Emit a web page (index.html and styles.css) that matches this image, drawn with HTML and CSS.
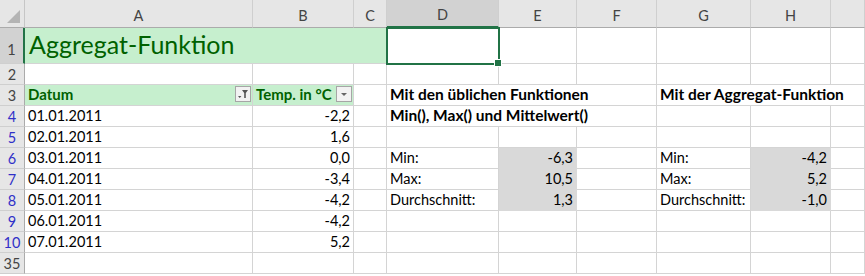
FILE: index.html
```html
<!DOCTYPE html>
<html lang="de">
	<head>
		<meta charset="UTF-8" />
		<meta name="viewport" content="width=device-width, initial-scale=1.0" />
		<title>Aggregat-Funktion</title>
		<link rel="stylesheet" href="styles.css">
	</head>
	<body>
		<div class="sheet">
			<!-- Spaltenköpfe -->
			<div class="corner"><span class="corner-tri"></span></div>
			<div class="col-head">A</div>
			<div class="col-head">B</div>
			<div class="col-head">C</div>
			<div class="col-head selected">D</div>
			<div class="col-head">E</div>
			<div class="col-head">F</div>
			<div class="col-head">G</div>
			<div class="col-head">H</div>
			<div class="col-head"></div>

			<!-- Zeile 1 -->
			<div class="row-head selected tall">1</div>
			<div class="cell title">Aggregat-Funktion</div>
			<div class="cell active"></div>
			<div class="cell"></div>
			<div class="cell"></div>
			<div class="cell"></div>
			<div class="cell"></div>
			<div class="cell"></div>

			<!-- Zeile 2 -->
			<div class="row-head">2</div>
			<div class="cell"></div><div class="cell"></div><div class="cell"></div>
			<div class="cell"></div><div class="cell"></div><div class="cell"></div>
			<div class="cell"></div><div class="cell"></div><div class="cell"></div>

			<!-- Zeile 3 -->
			<div class="row-head">3</div>
			<div class="cell th">
				<span>Datum</span>
				<span class="filter">
					<svg width="14" height="14" viewBox="0 0 14 14">
						<path d="M6 3h6l-2.2 3v5h-1.6v-5z" fill="#555" />
						<path d="M2 9h3.4l-1.7 2z" fill="#555" />
					</svg>
				</span>
			</div>
			<div class="cell th">
				<span>Temp. in °C</span>
				<span class="filter">
					<svg width="14" height="14" viewBox="0 0 14 14">
						<path d="M4 6h6l-3 3z" fill="#666" />
					</svg>
				</span>
			</div>
			<div class="cell"></div>
			<div class="cell bold span3">Mit den üblichen Funktionen</div>
			<div class="cell bold span3">Mit der Aggregat-Funktion</div>

			<!-- Zeile 4 -->
			<div class="row-head blue">4</div>
			<div class="cell">01.01.2011</div>
			<div class="cell num">-2,2</div>
			<div class="cell"></div>
			<div class="cell bold span3">Min(), Max() und Mittelwert()</div>
			<div class="cell"></div><div class="cell"></div><div class="cell"></div>

			<!-- Zeile 5 -->
			<div class="row-head blue">5</div>
			<div class="cell">02.01.2011</div>
			<div class="cell num">1,6</div>
			<div class="cell"></div><div class="cell"></div><div class="cell"></div>
			<div class="cell"></div><div class="cell"></div><div class="cell"></div>
			<div class="cell"></div>

			<!-- Zeile 6 -->
			<div class="row-head blue">6</div>
			<div class="cell">03.01.2011</div>
			<div class="cell num">0,0</div>
			<div class="cell"></div>
			<div class="cell">Min:</div>
			<div class="cell num grey">-6,3</div>
			<div class="cell"></div>
			<div class="cell">Min:</div>
			<div class="cell num grey">-4,2</div>
			<div class="cell"></div>

			<!-- Zeile 7 -->
			<div class="row-head blue">7</div>
			<div class="cell">04.01.2011</div>
			<div class="cell num">-3,4</div>
			<div class="cell"></div>
			<div class="cell">Max:</div>
			<div class="cell num grey">10,5</div>
			<div class="cell"></div>
			<div class="cell">Max:</div>
			<div class="cell num grey">5,2</div>
			<div class="cell"></div>

			<!-- Zeile 8 -->
			<div class="row-head blue">8</div>
			<div class="cell">05.01.2011</div>
			<div class="cell num">-4,2</div>
			<div class="cell"></div>
			<div class="cell">Durchschnitt:</div>
			<div class="cell num grey">1,3</div>
			<div class="cell"></div>
			<div class="cell">Durchschnitt:</div>
			<div class="cell num grey">-1,0</div>
			<div class="cell"></div>

			<!-- Zeile 9 -->
			<div class="row-head blue">9</div>
			<div class="cell">06.01.2011</div>
			<div class="cell num">-4,2</div>
			<div class="cell"></div><div class="cell"></div><div class="cell"></div>
			<div class="cell"></div><div class="cell"></div><div class="cell"></div>
			<div class="cell"></div>

			<!-- Zeile 10 -->
			<div class="row-head blue">10</div>
			<div class="cell">07.01.2011</div>
			<div class="cell num">5,2</div>
			<div class="cell"></div><div class="cell"></div><div class="cell"></div>
			<div class="cell"></div><div class="cell"></div><div class="cell"></div>
			<div class="cell"></div>

			<!-- Zeile 35 -->
			<div class="row-head">35</div>
			<div class="cell"></div><div class="cell"></div><div class="cell"></div>
			<div class="cell"></div><div class="cell"></div><div class="cell"></div>
			<div class="cell"></div><div class="cell"></div><div class="cell"></div>
		</div>
	</body>
</html>
```

FILE: styles.css
```css
* {
	box-sizing: border-box;
}
body {
	margin: 0;
	background: #fff;
	font-family: Lato, "Open Sans", sans-serif;
	font-size: 14.5px;
	color: #000;
}

.sheet {
	display: grid;
	grid-template-columns: 25px 228px 101px 33px 112px 78px 80px 94px 80px 1fr;
	grid-template-rows: 28px 36px repeat(10, 21px);
	width: 865px;
}

/* Kopfzeilen */
.corner,
.col-head,
.row-head {
	background: #e6e6e6;
	color: #444;
	font-size: 14.5px;
	display: flex;
	justify-content: center;
}
.corner {
	position: relative;
	border-right: 1px solid #c6c6c6;
	border-bottom: 1px solid #ababab;
}
.corner-tri {
	position: absolute;
	right: 4px;
	bottom: 4px;
	width: 0;
	height: 0;
	border-left: 13px solid transparent;
	border-bottom: 13px solid #b4b4b4;
}
.col-head {
	align-items: flex-end;
	padding-bottom: 3px;
	border-right: 1px solid #cfcfcf;
	border-bottom: 1px solid #ababab;
}
.col-head.selected {
	background: #d2d2d2;
	border-bottom: 2px solid #217346;
}
.row-head {
	align-items: flex-end;
	padding-bottom: 1px;
	border-right: 1px solid #ababab;
	border-bottom: 1px solid #cfcfcf;
}
.row-head.selected {
	background: #d2d2d2;
	border-right: 2px solid #217346;
}
.row-head.tall {
	padding-bottom: 5px;
}
.row-head.blue {
	color: #3030c8;
}

/* Zellen */
.cell {
	display: flex;
	align-items: flex-end;
	padding: 0 3px 2px 3px;
	border-right: 1px solid #d4d4d4;
	border-bottom: 1px solid #d4d4d4;
	white-space: nowrap;
	min-width: 0;
}
.cell.span3 {
	grid-column: span 3;
}
.cell.num {
	justify-content: flex-end;
}
.cell.bold {
	font-weight: bold;
	font-size: 15.5px;
}
.cell.grey {
	background: #d9d9d9;
	border-color: #d9d9d9;
}
.cell.title {
	grid-column: span 3;
	background: #c6efce;
	color: #006100;
	font-size: 25px;
	padding-left: 4px;
	padding-bottom: 4px;
	border-right: none;
}
.cell.active {
	position: relative;
	outline: 2px solid #217346;
	outline-offset: -1px;
}
.cell.active::after {
	content: "";
	position: absolute;
	right: -4px;
	bottom: -4px;
	width: 6px;
	height: 6px;
	background: #217346;
	border: 1px solid #fff;
}
.cell.th {
	background: #c6efce;
	color: #006100;
	font-weight: bold;
	font-size: 15px;
	justify-content: space-between;
	padding-right: 1px;
}
.filter {
	display: flex;
	align-items: center;
	justify-content: center;
	width: 16px;
	height: 16px;
	margin-bottom: 1px;
	background: #f2f2f2;
	border: 1px solid #a6a6a6;
}
```
